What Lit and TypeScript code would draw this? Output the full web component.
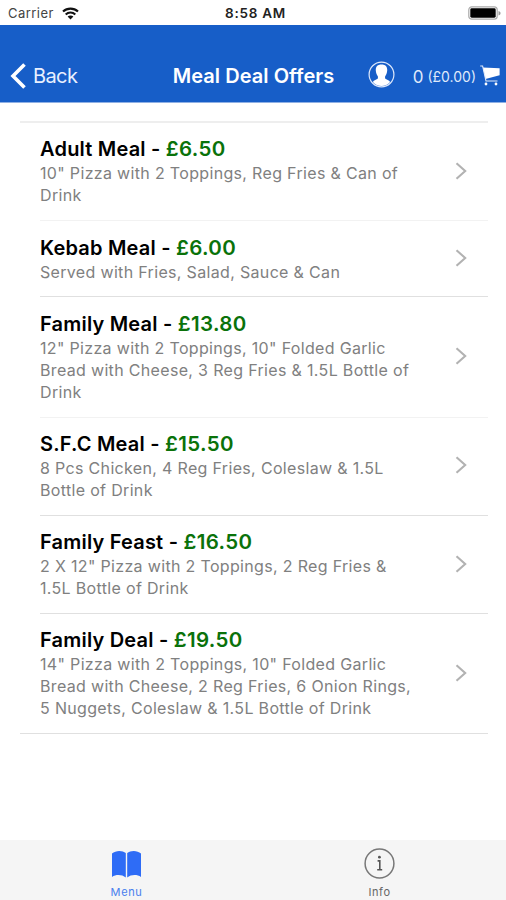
import { LitElement, html, css } from "lit";
import { customElement } from "lit/decorators.js";

interface Meal {
  name: string;
  price: string;
  lines: string[];
}

const MEALS: Meal[] = [
  { name: "Adult Meal", price: "£6.50", lines: ['10" Pizza with 2 Toppings, Reg Fries & Can of', "Drink"] },
  { name: "Kebab Meal", price: "£6.00", lines: ["Served with Fries, Salad, Sauce & Can"] },
  { name: "Family Meal", price: "£13.80", lines: ['12" Pizza with 2 Toppings, 10" Folded Garlic', "Bread with Cheese, 3 Reg Fries & 1.5L Bottle of", "Drink"] },
  { name: "S.F.C Meal", price: "£15.50", lines: ["8 Pcs Chicken, 4 Reg Fries, Coleslaw & 1.5L", "Bottle of Drink"] },
  { name: "Family Feast", price: "£16.50", lines: ['2 X 12" Pizza with 2 Toppings, 2 Reg Fries &', "1.5L Bottle of Drink"] },
  { name: "Family Deal", price: "£19.50", lines: ['14" Pizza with 2 Toppings, 10" Folded Garlic', "Bread with Cheese, 2 Reg Fries, 6 Onion Rings,", "5 Nuggets, Coleslaw & 1.5L Bottle of Drink"] },
];

@customElement("status-bar")
class StatusBar extends LitElement {
  static styles = css`
    :host { display: grid; grid-template-columns: 1fr auto 1fr; align-items: center; height: 25px; padding: 0 5px 0 8px; box-sizing: border-box; background: #fff; font-size: 13px; color: #222; }
    .carrier { display: flex; align-items: center; gap: 8px; letter-spacing: 0.45px; line-height: 25px; color: #444; }
    .time { font-weight: 600; font-size: 13.5px; line-height: 25px; padding-top: 1px; letter-spacing: 0.75px; padding-left: 2px; }
    .battery { justify-self: end; }
    svg { display: block; }
  `;
  render() {
    return html`
      <div class="carrier"><span>Carrier</span>
        <svg width="17" height="13" viewBox="0 0 17 13" fill="none" stroke="#111" stroke-width="2.1">
          <path d="M1 4.6C5.2 .6 11.8 .6 16 4.6M3.7 7.5c2.7-2.6 6.9-2.6 9.6 0" />
          <path d="M8.5 12.4l-2.9-2.8c1.6-1.5 4.2-1.5 5.8 0z" fill="#111" stroke="none" />
        </svg>
      </div>
      <div class="time">8:58 AM</div>
      <svg class="battery" width="33" height="14" viewBox="0 0 33 14">
        <rect x=".8" y=".8" width="28.4" height="12.4" rx="3" fill="#fff" stroke="#aaa" stroke-width="1.2" />
        <rect x="2.3" y="2.3" width="25.4" height="9.4" rx="1.4" fill="#000" />
        <path d="M30.5 5v4.4c1.6-.5 2-1.2 2-2.2s-.4-1.7-2-2.2z" fill="#999" />
      </svg>`;
  }
}

@customElement("nav-bar")
class NavBar extends LitElement {
  static styles = css`
    :host { display: grid; grid-template-columns: 1fr auto 1fr; height: 78px; padding: 24px 6px 0 10px; box-sizing: border-box; background: #175ec8; border-bottom: 1px solid #8fb0e4; color: #fff; align-items: center; }
    .back { display: flex; align-items: center; gap: 7px; font-size: 20px; letter-spacing: -0.6px; color: #e8f0ff; }
    .back span { padding-top: 1px; }
    .title { font-size: 20px; font-weight: 600; letter-spacing: 0.05px; white-space: nowrap; padding-top: 1px; margin-left: -3px; }
    .tools { display: flex; align-items: center; justify-content: flex-end; color: #dfe9fb; }
    .user { margin-right: 18px; margin-top: -2px; }
    .count { font-size: 17px; margin-right: 4px; padding-top: 2px; }
    .total { font-size: 14px; margin-right: 4px; white-space: nowrap; padding-top: 1px; }
    svg { display: block; flex: none; }
  `;
  render() {
    return html`
      <div class="back">
        <svg width="16" height="26" viewBox="0 0 16 26" fill="none" stroke="#fff" stroke-width="3.6"><path d="M14.5 1.4L3 13l11.5 11.6" /></svg>
        <span>Back</span>
      </div>
      <div class="title">Meal Deal Offers</div>
      <div class="tools">
        <svg class="user" width="27" height="27" viewBox="0 0 27 27">
          <circle cx="13.5" cy="13.5" r="12.4" fill="none" stroke="#dfe9fb" stroke-width="1.2" />
          <path d="M13.5 3.4c4.400 0 6 2.600 5.700 6.200-.2 2.600-.9 4.300-2 5.600-.3 1.200-.2 2.300.5 2.900 1.600.9 3.300 1.200 4.400 2.900a11.400 11.400 0 0 1-17.200 0c1.100-1.700 2.800-2 4.400-2.900.7-.6.8-1.700.5-2.900-1.100-1.300-1.800-3-2-5.600-.3-3.600 1.300-6.200 5.700-6.200z" fill="#fff" />
        </svg>
        <span class="count">0</span><span class="total">(£0.00)</span>
        <svg width="20" height="21" viewBox="0 0 20 21" fill="none">
          <path d="M2.800 2.500L19.600 3.200V10.200L5.500 14z" fill="#fff" />
          <path d="M.2 1h2.400L6 16H17.500" stroke="#dfe9fb" stroke-width="1.100" />
          <circle cx="6" cy="19" r="1.400" fill="#fff" /><circle cx="16" cy="19" r="1.400" fill="#fff" />
        </svg>
      </div>`;
  }
}

@customElement("meal-row")
class MealRow extends LitElement {
  static properties = { meal: { attribute: false } };
  declare meal: Meal;
  static styles = css`
    :host { display: flex; align-items: center; justify-content: space-between; padding: 14.4px 21px 13.8px 0; }
    .name { font-size: 20px; line-height: 25px; font-weight: 600; color: #000; white-space: nowrap; letter-spacing: 0.2px; }
    .price { color: #0a720a; font-size: 20.5px; line-height: 1; letter-spacing: 0.35px; }
    .line { font-size: 16px; line-height: 22px; color: #808080; white-space: nowrap; letter-spacing: 0.33px; }
    svg { display: block; flex: none; margin-top: -2px; }
  `;
  render() {
    return html`
      <div>
        <div class="name">${this.meal.name} - <span class="price">${this.meal.price}</span></div>
        ${this.meal.lines.map((l) => html`<div class="line">${l}</div>`)}
      </div>
      <svg width="12" height="18" viewBox="0 0 12 18" fill="none" stroke="#b2b2b2" stroke-width="2.1"><path d="M1.5 1.2L10.2 9 1.5 16.8" /></svg>`;
  }
}

@customElement("tab-bar")
class TabBar extends LitElement {
  static styles = css`
    :host { display: grid; grid-template-columns: 1fr 1fr; height: 60px; background: #f5f5f5; }
    .tab { display: flex; flex-direction: column; align-items: center; font-size: 11px; letter-spacing: 0.6px; color: #666; }
    .active { color: #4a80ee; }
    .icon { height: 46px; display: flex; align-items: center; padding-top: 1px; box-sizing: border-box; }
    .label { line-height: 13px; }
  `;
  render() {
    return html`
      <div class="tab active">
        <div class="icon">
          <svg width="29" height="28" viewBox="0 0 29 28" fill="#2e6cf6">
            <path d="M0 3.5C3.6.2 10.4.2 13.8 3v24.5c-3.800-3.200-10-3.200-13.800-.6z" />
            <path d="M29 3.5C25.4.2 18.6.2 15.2 3v24.5c3.800-3.200 10-3.200 13.800-.6z" />
          </svg>
        </div>
        <div class="label">Menu</div>
      </div>
      <div class="tab">
        <div class="icon">
          <svg width="31" height="31" viewBox="0 0 31 31" fill="none" stroke="#777" stroke-width="1.5">
            <circle cx="15.5" cy="15.5" r="14.4" />
            <path d="M13.6 12.9h2.2v8.6M13.2 21.8h5" stroke="#555" stroke-width="1.6" />
            <circle cx="15.4" cy="9.2" r="1.4" fill="#555" stroke="none" />
          </svg>
        </div>
        <div class="label">Info</div>
      </div>`;
  }
}

@customElement("app-root")
class AppRoot extends LitElement {
  static styles = css`
    :host { display: flex; flex-direction: column; height: 900px; background: #fff; font-family: Inter, "Liberation Sans", sans-serif; overflow: hidden; }
    .list { flex: 1; margin: 18px 18px 0 20px; border-top: 2px solid #eee; }
    .row { margin-left: 20px; border-bottom: 1px solid #e0e0e0; }
    .row.faint { border-color: #f2f2f2; }
    .row.last { margin-left: 0; padding-left: 20px; }
  `;
  render() {
    return html`
      <status-bar></status-bar>
      <nav-bar></nav-bar>
      <div class="list">
        ${MEALS.map((m, i) => html`<meal-row class="row ${i === 0 || i === 2 ? "faint" : ""} ${i === MEALS.length - 1 ? "last" : ""}" .meal=${m}></meal-row>`)}
      </div>
      <tab-bar></tab-bar>`;
  }
}
